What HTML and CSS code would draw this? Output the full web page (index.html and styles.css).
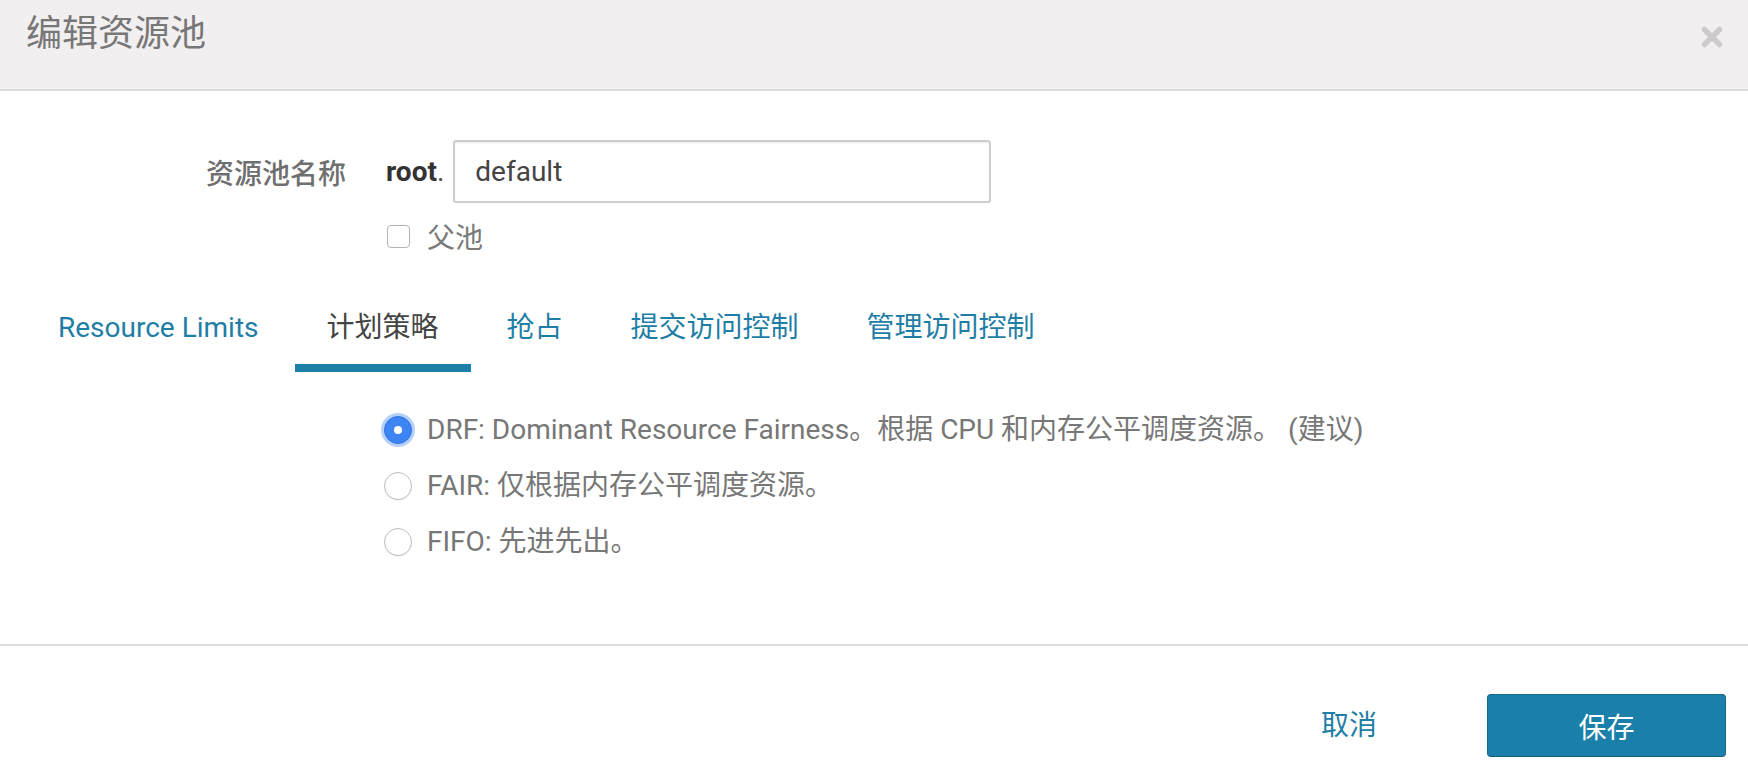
FILE: index.html
```html
<!DOCTYPE html>
<html lang="zh-CN">
<head>
<meta charset="utf-8">
<title>编辑资源池</title>
<link rel="stylesheet" href="styles.css">
</head>
<body>
<div class="dialog">
  <header class="dlg-header">
    <h1 class="dlg-title">编辑资源池</h1>
    <button class="dlg-close" aria-label="关闭">
      <svg width="22" height="22" viewBox="0 0 22 22"><path d="M3.5 3.5 L18.5 18.5 M18.5 3.5 L3.5 18.5" stroke="#cbcbcb" stroke-width="5.5" stroke-linecap="round"/></svg>
    </button>
  </header>

  <main class="dlg-body">
    <div class="form-row">
      <label class="form-label">资源池名称</label>
      <div class="form-controls">
        <span class="prefix"><b>root</b>.</span>
        <div class="text-input">default</div>
      </div>
    </div>
    <div class="check-row">
      <span class="checkbox"></span>
      <span class="check-label">父池</span>
    </div>

    <nav class="tabs">
      <a class="tab">Resource Limits</a>
      <a class="tab active">计划策略</a>
      <a class="tab">抢占</a>
      <a class="tab">提交访问控制</a>
      <a class="tab">管理访问控制</a>
    </nav>

    <div class="radio-list">
      <div class="radio-row"><span class="radio checked"></span><span class="radio-text">DRF: Dominant Resource Fairness。根据 CPU 和内存公平调度资源。 (建议)</span></div>
      <div class="radio-row"><span class="radio"></span><span class="radio-text">FAIR: 仅根据内存公平调度资源。</span></div>
      <div class="radio-row"><span class="radio"></span><span class="radio-text">FIFO: 先进先出。</span></div>
    </div>
  </main>

  <footer class="dlg-footer">
    <button class="btn-link">取消</button>
    <button class="btn-primary">保存</button>
  </footer>
</div>
</body>
</html>
```

FILE: styles.css
```css
* { box-sizing: border-box; }
html, body { margin: 0; padding: 0; background: #fff; }
body {
  font-family: Roboto, "Noto Sans CJK SC", sans-serif;
  font-size: 28px;
  color: #777;
}
.dialog {
  width: 1748px;
  height: 784px;
  display: flex;
  flex-direction: column;
}
.dlg-header {
  height: 91px;
  background: #f1eff0;
  border-bottom: 2px solid #dcdcdc;
  display: flex;
  justify-content: space-between;
  align-items: flex-start;
  padding: 12px 25px 0 26px;
}
.dlg-title {
  margin: 0;
  font-size: 36px;
  line-height: 44px;
  font-weight: 400;
  color: #777;
}
.dlg-close {
  border: 0;
  background: none;
  padding: 0;
  margin-top: 14px;
  width: 22px;
  height: 22px;
  display: flex;
}
.dlg-body {
  flex: 1;
  padding: 49px 24px 0 24px;
}
.form-row {
  display: flex;
  align-items: center;
  height: 63px;
}
.form-label {
  width: 322px;
  text-align: right;
  margin-right: 40px;
  font-weight: 500;
  color: #6f6f6f;
}
.form-controls {
  display: flex;
  align-items: center;
}
.prefix { color: #444; margin-right: 9px; }
.prefix b { font-weight: 700; color: #333; }
.text-input {
  width: 538px;
  height: 63px;
  border: 2px solid #cdcdcd;
  border-radius: 3px;
  box-shadow: inset 0 1px 2px rgba(0,0,0,0.08);
  padding: 0 20px;
  line-height: 59px;
  color: #444;
}
.check-row {
  display: flex;
  align-items: center;
  margin: 16px 0 0 363px;
  height: 34px;
}
.checkbox {
  width: 23px;
  height: 23px;
  border: 1px solid #b4b4b4;
  border-radius: 4px;
  background: #fff;
  margin-right: 17px;
}
.check-label { color: #7a7a7a; }
.tabs {
  display: flex;
  margin: 58px 0 0 2px;
}
.tab {
  padding: 0 32px 19px;
  line-height: 34px;
  border-bottom: 8px solid transparent;
  color: #1f7ea6;
  margin-right: 4px;
}
.tab.active {
  color: #444;
  border-bottom-color: #1b7fa8;
}
.radio-list {
  margin: 30px 0 0 360px;
}
.radio-row {
  display: flex;
  align-items: center;
  height: 56px;
}
.radio {
  width: 28px;
  height: 28px;
  border-radius: 50%;
  border: 1px solid #bdbdbd;
  background: #fff;
  box-shadow: 0 1px 1px rgba(0,0,0,0.06);
  margin-right: 15px;
  display: flex;
  align-items: center;
  justify-content: center;
}
.radio.checked {
  background: #3d85f4;
  border-color: #2f74e0;
  box-shadow: 0 0 0 3px rgba(90,150,245,0.45);
}
.radio.checked::after {
  content: "";
  width: 8px;
  height: 8px;
  border-radius: 50%;
  background: #fff;
}
.radio-text { color: #777; line-height: 34px; }
.dlg-footer {
  height: 140px;
  border-top: 2px solid #dcdcdc;
  display: flex;
  justify-content: flex-end;
  align-items: flex-start;
  padding: 48px 22px 0 0;
}
.btn-link {
  border: 0;
  background: none;
  font: inherit;
  color: #1f7ea6;
  height: 63px;
  padding: 0 55px;
  margin-right: 55px;
  line-height: 63px;
}
.btn-primary {
  font: inherit;
  width: 239px;
  height: 63px;
  background: #1b80a9;
  color: #fff;
  border: 1px solid #17698b;
  border-bottom-color: #145c7a;
  border-radius: 4px;
  padding: 0;
}
```
